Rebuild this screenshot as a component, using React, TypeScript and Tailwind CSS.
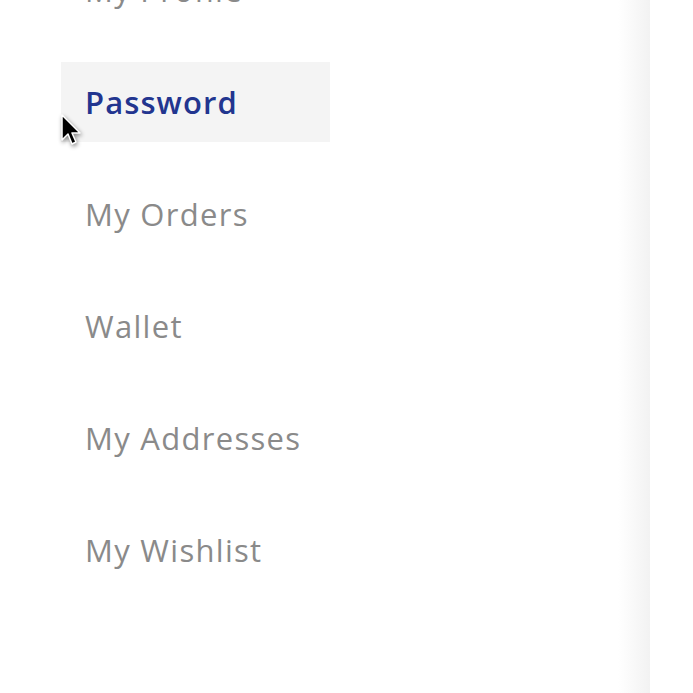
import React from 'react';

const items = ['My Profile', 'Password', 'My Orders', 'Wallet', 'My Addresses', 'My Wishlist'];

function Cursor() {
  return (
    <svg
      className="absolute left-[59px] top-[113px] drop-shadow-[1px_2px_2px_rgba(0,0,0,0.45)]"
      width="24"
      height="36"
      viewBox="0 0 24 36"
    >
      <path
        d="M3 2 L3 27 L9 21 L13 31 L17 29 L13 20 L21 20 Z"
        fill="#000"
        stroke="#fff"
        strokeWidth="1.5"
        strokeLinejoin="round"
      />
    </svg>
  );
}

export default function App() {
  return (
    <div className="relative flex h-[693px] w-[693px] overflow-hidden bg-white font-['Open_Sans',sans-serif]">
      <div className="flex w-[650px]">
        <nav className="flex-1">
          <ul className="mt-[-50px] flex flex-col gap-8 pl-[61px]">
            {items.map((label) => {
              const active = label === 'Password';
              return (
                <li
                  key={label}
                  className={
                    active
                      ? 'flex h-[80px] w-[269px] items-center bg-[#f4f4f4] px-6 text-[31px] font-semibold tracking-[1.1px] text-[#22358f]'
                      : 'flex h-[80px] w-[269px] items-center px-6 text-[31px] tracking-[1.3px] text-[#8a8a8a]'
                  }
                >
                  {label}
                </li>
              );
            })}
          </ul>
        </nav>
        <div className="w-[32px] bg-gradient-to-r from-white to-[#f2f2f2]" />
      </div>
      <div className="flex-1 bg-white" />
      <Cursor />
    </div>
  );
}
